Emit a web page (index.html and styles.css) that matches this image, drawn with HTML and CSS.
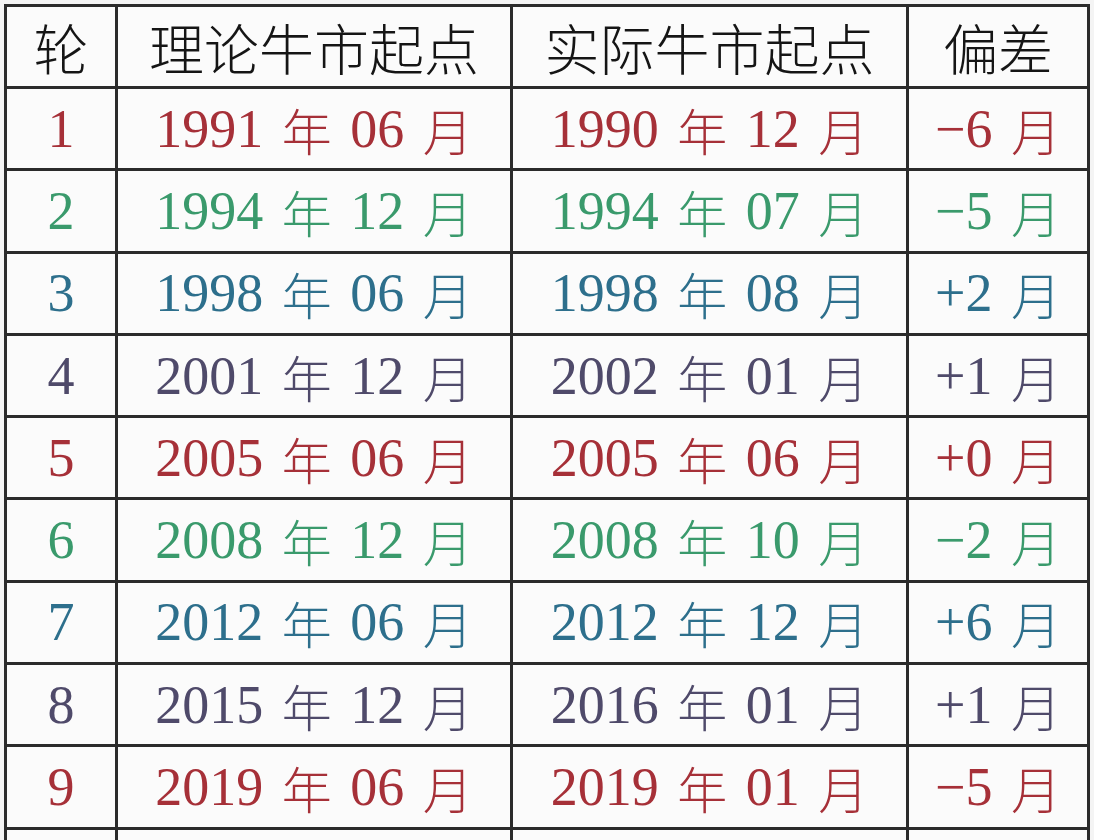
FILE: index.html
```html
<!DOCTYPE html>
<html lang="zh-CN">
<head>
<meta charset="utf-8">
<title>牛市起点</title>
<link rel="stylesheet" href="styles.css">
</head>
<body>
<div class="grid">
  <div class="cell head"><span class="cjk">轮</span></div>
  <div class="cell head"><span class="cjk">理论牛市起点</span></div>
  <div class="cell head"><span class="cjk">实际牛市起点</span></div>
  <div class="cell head"><span class="cjk">偏差</span></div>

  <div class="cell red">1</div>
  <div class="cell red">1991 <span class="cjk">年</span> 06 <span class="cjk">月</span></div>
  <div class="cell red">1990 <span class="cjk">年</span> 12 <span class="cjk">月</span></div>
  <div class="cell red">−6 <span class="cjk">月</span></div>

  <div class="cell green">2</div>
  <div class="cell green">1994 <span class="cjk">年</span> 12 <span class="cjk">月</span></div>
  <div class="cell green">1994 <span class="cjk">年</span> 07 <span class="cjk">月</span></div>
  <div class="cell green">−5 <span class="cjk">月</span></div>

  <div class="cell teal">3</div>
  <div class="cell teal">1998 <span class="cjk">年</span> 06 <span class="cjk">月</span></div>
  <div class="cell teal">1998 <span class="cjk">年</span> 08 <span class="cjk">月</span></div>
  <div class="cell teal">+2 <span class="cjk">月</span></div>

  <div class="cell purple">4</div>
  <div class="cell purple">2001 <span class="cjk">年</span> 12 <span class="cjk">月</span></div>
  <div class="cell purple">2002 <span class="cjk">年</span> 01 <span class="cjk">月</span></div>
  <div class="cell purple">+1 <span class="cjk">月</span></div>

  <div class="cell red">5</div>
  <div class="cell red">2005 <span class="cjk">年</span> 06 <span class="cjk">月</span></div>
  <div class="cell red">2005 <span class="cjk">年</span> 06 <span class="cjk">月</span></div>
  <div class="cell red">+0 <span class="cjk">月</span></div>

  <div class="cell green">6</div>
  <div class="cell green">2008 <span class="cjk">年</span> 12 <span class="cjk">月</span></div>
  <div class="cell green">2008 <span class="cjk">年</span> 10 <span class="cjk">月</span></div>
  <div class="cell green">−2 <span class="cjk">月</span></div>

  <div class="cell teal">7</div>
  <div class="cell teal">2012 <span class="cjk">年</span> 06 <span class="cjk">月</span></div>
  <div class="cell teal">2012 <span class="cjk">年</span> 12 <span class="cjk">月</span></div>
  <div class="cell teal">+6 <span class="cjk">月</span></div>

  <div class="cell purple">8</div>
  <div class="cell purple">2015 <span class="cjk">年</span> 12 <span class="cjk">月</span></div>
  <div class="cell purple">2016 <span class="cjk">年</span> 01 <span class="cjk">月</span></div>
  <div class="cell purple">+1 <span class="cjk">月</span></div>

  <div class="cell red">9</div>
  <div class="cell red">2019 <span class="cjk">年</span> 06 <span class="cjk">月</span></div>
  <div class="cell red">2019 <span class="cjk">年</span> 01 <span class="cjk">月</span></div>
  <div class="cell red">−5 <span class="cjk">月</span></div>

  <div class="cell"></div>
  <div class="cell"></div>
  <div class="cell"></div>
  <div class="cell"></div>
</div>
</body>
</html>
```

FILE: styles.css
```css
html, body {
  margin: 0;
  padding: 0;
  width: 1094px;
  height: 840px;
  overflow: hidden;
  background: #f4f4f4;
}

body {
  padding: 4px 0 0 4px;
  box-sizing: border-box;
  font-family: "Liberation Serif", "Noto Sans CJK SC", serif;
}

.grid {
  display: grid;
  grid-template-columns: 108px 392px 393px 178px;
  grid-template-rows: 79px;
  grid-auto-rows: 79.3px;
  gap: 3px;
  padding: 3px;
  background: #2b2b2b;
  width: max-content;
}

.cell {
  background: #fbfbfb;
  display: flex;
  align-items: center;
  justify-content: center;
  font-size: 54px;
  line-height: 1;
  white-space: pre;
  word-spacing: 5px;
}

.cjk {
  font-family: "Noto Sans CJK SC", sans-serif;
  font-weight: 300;
  font-size: 50px;
}

.head {
  color: #151515;
}

.head .cjk {
  font-size: 55px;
  font-weight: 300;
}

.red { color: #a63038; }
.green { color: #3a9a6c; }
.teal { color: #2d6f8c; }
.purple { color: #4f4a6a; }
```
